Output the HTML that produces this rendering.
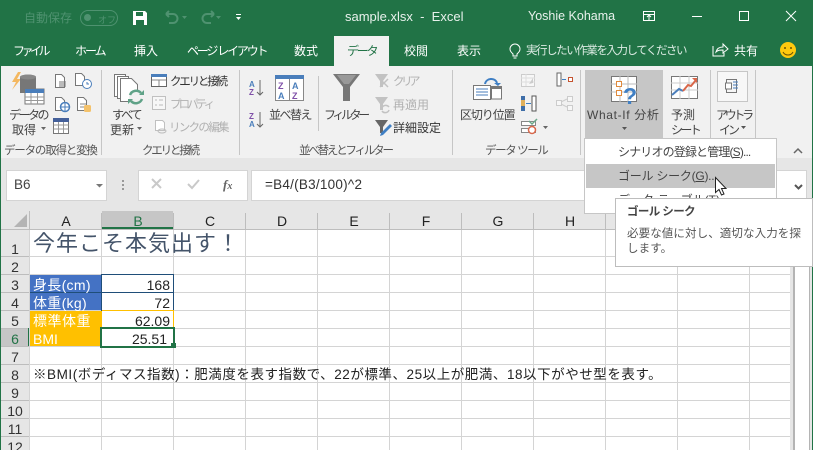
<!DOCTYPE html>
<html lang="ja"><head><meta charset="utf-8"><title>sample.xlsx - Excel</title>
<style>
html,body{margin:0;padding:0;background:#fff}
#p{position:relative;width:815px;height:450px;overflow:hidden;background:#fff;font-family:"Liberation Sans","Noto Sans CJK JP",sans-serif;font-size:12px;color:#444}
.a{position:absolute}
.t{position:absolute;white-space:nowrap;line-height:14px}
.d{color:#b1b1b1}
svg{position:absolute;left:0;top:0}
.c{color:#222;font-size:14px;line-height:16px}
.w{color:#fff}
.r{position:absolute;left:1px;width:28px;text-align:center;color:#333;font-size:14px;line-height:16px}
.h{position:absolute;top:214px;width:72px;text-align:center;color:#222;font-size:14px;line-height:14px}
</style></head><body><div id="p">
<div class="a" style="left:0;top:0;width:813px;height:66px;background:#217346"></div>
<div class="a" style="left:1px;top:66px;width:811px;height:92px;background:#f1f1f1"></div>
<div class="a" style="left:1px;top:158px;width:811px;height:53px;background:#e6e6e6"></div>
<div class="a" style="left:0;top:66px;width:1px;height:384px;background:#217346"></div>
<div class="a" style="left:812px;top:66px;width:1px;height:384px;background:#217346"></div>
<div class="a" style="left:334px;top:36px;width:55px;height:30px;background:#f1f1f1"></div>

<div class="t" style="left:24px;top:11px;color:#4f9270;font-size:12px">自動保存</div>
<div class="a" style="left:80px;top:10px;width:36px;height:14px;border:1px solid #4f9270;border-radius:8px"></div>
<div class="a" style="left:84px;top:14px;width:7px;height:7px;border-radius:50%;background:#4f9270"></div>
<div class="t" style="left:98px;top:13px;color:#4f9270;font-size:9px">オフ</div>
<div class="t w" style="left:345px;top:10px;font-size:13px;color:#e8f1ec">sample.xlsx&nbsp; - &nbsp;Excel</div>
<div class="t w" style="left:528px;top:9px;font-size:12.5px;color:#e8f1ec">Yoshie Kohama</div>

<div class="t w" style="left:13px;top:44px;letter-spacing:-3.5px">ファイル</div>
<div class="t w" style="left:75px;top:44px;letter-spacing:-2px">ホーム</div>
<div class="t w" style="left:134px;top:44px">挿入</div>
<div class="t w" style="left:187px;top:44px;letter-spacing:-2.2px">ページ レイアウト</div>
<div class="t w" style="left:294px;top:44px">数式</div>
<div class="t" style="left:347px;top:44px;color:#217346;letter-spacing:-2.2px">データ</div>
<div class="t w" style="left:404px;top:44px">校閲</div>
<div class="t w" style="left:457px;top:44px">表示</div>
<div class="t" style="left:526px;top:44px;font-size:11.5px;letter-spacing:-1.45px;color:#dcebe3">実行したい作業を入力してください</div>
<div class="t w" style="left:734px;top:44px">共有</div>

<div class="t" style="left:9px;top:108px;letter-spacing:-2.5px">データの</div>
<div class="t" style="left:12px;top:123px">取得</div>
<div class="t" style="left:112px;top:108px;letter-spacing:-2px">すべて</div>
<div class="t" style="left:110px;top:123px">更新</div>
<div class="t" style="left:170px;top:75px;color:#333;letter-spacing:-2.2px;font-size:11.5px">クエリと接続</div>
<div class="t d" style="left:170px;top:98px;font-size:11.5px;letter-spacing:-2.9px">プロパティ</div>
<div class="t d" style="left:169px;top:121px;font-size:11.5px;letter-spacing:-1.7px">リンクの編集</div>
<div class="t" style="left:269px;top:108px;letter-spacing:-1.5px">並べ替え</div>
<div class="t" style="left:324px;top:108px;letter-spacing:-3.4px">フィルター</div>
<div class="t d" style="left:393px;top:75px;font-size:11.5px;letter-spacing:-3.5px">クリア</div>
<div class="t d" style="left:393px;top:98px">再適用</div>
<div class="t" style="left:393px;top:121px;color:#333">詳細設定</div>
<div class="t" style="left:460px;top:108px;letter-spacing:-1.1px">区切り位置</div>

<div class="a" style="left:585px;top:70px;width:78px;height:68px;background:#c6c6c6"></div>
<div class="t" style="left:587px;top:108px;font-size:12px;letter-spacing:.65px;color:#444">What-If 分析</div>
<div class="t" style="left:671px;top:108px">予測</div>
<div class="t" style="left:671px;top:123px;letter-spacing:-2.6px">シート</div>
<div class="a" style="left:717px;top:71px;width:29px;height:29px;border:1px solid #c6c6c6;background:#f7f7f7"></div>
<div class="t" style="left:716px;top:108px;letter-spacing:-3.3px">アウトラ</div>
<div class="t" style="left:719px;top:123px;letter-spacing:-3px">イン</div>

<div class="t" style="left:4px;top:144px;font-size:11.5px;letter-spacing:-1.2px;color:#555">データの取得と変換</div>
<div class="t" style="left:142px;top:144px;font-size:11.5px;letter-spacing:-2.2px;color:#555">クエリと接続</div>
<div class="t" style="left:299px;top:144px;font-size:11.5px;letter-spacing:-2.2px;color:#555">並べ替えとフィルター</div>
<div class="t" style="left:485px;top:144px;font-size:11.5px;letter-spacing:-1.4px;color:#555">データ ツール</div>

<div class="a" style="left:6px;top:170px;width:101px;height:31px;background:#fff;border:1px solid #d4d4d4;box-sizing:border-box"></div>
<div class="t" style="left:14px;top:178px;font-size:13.5px;color:#444">B6</div>
<div class="a" style="left:138px;top:170px;width:110px;height:31px;background:#fff;border:1px solid #d4d4d4;box-sizing:border-box"></div>
<div class="a" style="left:251px;top:170px;width:556px;height:31px;background:#fff;border:1px solid #d4d4d4;box-sizing:border-box"></div>
<div class="t" style="left:265px;top:178px;font-size:13.5px;color:#333;letter-spacing:.25px">=B4/(B3/100)^2</div>
<div class="t" style="left:223px;top:178px;font-family:'Liberation Serif',serif;font-style:italic;font-weight:bold;font-size:13px;color:#666">f<span style="font-size:10px">x</span></div>

<!-- grid -->
<div class="a" style="left:1px;top:211px;width:789px;height:18px;background:#e6e6e6"></div>
<div class="a" style="left:1px;top:229px;width:28px;height:221px;background:#e6e6e6"></div>
<div class="a" style="left:102px;top:211px;width:71px;height:18px;background:#c6c6c6"></div>
<div class="a" style="left:1px;top:328px;width:28px;height:18px;background:#c6c6c6"></div>
<svg width="815" height="450" shape-rendering="crispEdges">
<g stroke="#d4d4d4" fill="none">
<path d="M29.5 229V450M101.500 229V450M173.500 229V450M245.500 229V450M317.500 229V450M389.500 229V450M461.500 229V450M533.500 229V450M605.500 229V450M677.500 229V450M749.500 229V450"/>
<path d="M29 256.500H790M29 274.500H790M29 292.500H790M29 310.500H790M29 328.500H790M29 346.500H790M29 364.500H790M29 382.500H790M29 400.500H790M29 418.500H790M29 436.500H790"/>
</g>
<g stroke="#bdbdbd" fill="none">
<path d="M29.500 211V229M101.500 213V229M173.500 213V229M245.500 213V229M317.500 213V229M389.500 213V229M461.500 213V229M533.500 213V229M605.500 213V229M677.500 213V229M749.500 213V229"/>
<path d="M1 229.500H790M1 256.500H29M1 274.500H29M1 292.500H29M1 310.500H29M1 328.500H29M1 346.500H29M1 364.500H29M1 382.500H29M1 400.500H29M1 418.500H29M1 436.500H29"/>
</g>
<rect x="790" y="211" width="3" height="239" fill="#e6e6e6"/>
<rect x="793" y="211" width="2" height="239" fill="#b4b4b4"/>
<rect x="795" y="211" width="14" height="239" fill="#fff"/>
<rect x="809" y="211" width="1" height="239" fill="#b4b4b4"/>
<rect x="810" y="211" width="2" height="239" fill="#e6e6e6"/>
<rect x="30" y="275" width="71" height="35" fill="#4472c4"/>
<rect x="30" y="311" width="71" height="35" fill="#ffc000"/>
<path d="M101.500 274V311M173.500 274V311M102 274.500H174M102 292.500H174" stroke="#1f4e79" fill="none"/>
<path d="M30 292.500H101" stroke="#1f4e79"/>
<path d="M102 310.500H174M173.500 311V328M101.500 311V346" stroke="#ffc000" fill="none"/>
<rect x="101" y="328" width="73" height="19" fill="none" stroke="#217346" stroke-width="2"/>
<rect x="171" y="343" width="5" height="5" fill="#217346"/>
<rect x="102" y="227" width="71" height="2" fill="#217346"/>
<rect x="28" y="328" width="1" height="18" fill="#217346"/>
</svg>
<div class="h" style="left:30px">A</div><div class="h" style="left:102px;color:#217346">B</div><div class="h" style="left:174px">C</div><div class="h" style="left:246px">D</div><div class="h" style="left:318px">E</div><div class="h" style="left:390px">F</div><div class="h" style="left:462px">G</div><div class="h" style="left:534px">H</div>
<div class="r" style="top:241px">1</div><div class="r" style="top:259px">2</div><div class="r" style="top:277px">3</div><div class="r" style="top:295px">4</div><div class="r" style="top:313px">5</div><div class="r" style="top:331px;color:#217346">6</div><div class="r" style="top:349px">7</div><div class="r" style="top:367px">8</div><div class="r" style="top:385px">9</div><div class="r" style="top:403px">10</div><div class="r" style="top:421px">11</div><div class="r" style="top:439px">12</div>

<div class="t" style="left:33px;top:232px;font-size:22px;line-height:24px;color:#44546a;letter-spacing:1px">今年こそ本気出す！</div>
<div class="t c w" style="left:33px;top:277px;letter-spacing:.3px">身長(cm)</div>
<div class="t c w" style="left:33px;top:295px;letter-spacing:.3px">体重(kg)</div>
<div class="t c w" style="left:33px;top:313px;letter-spacing:.5px">標準体重</div>
<div class="t c w" style="left:33px;top:331px">BMI</div>
<div class="t c" style="right:645px;top:277px">168</div>
<div class="t c" style="right:645px;top:295px">72</div>
<div class="t c" style="right:645px;top:313px">62.09</div>
<div class="t c" style="right:648px;top:331px">25.51</div>
<div class="t c" style="left:33px;top:367px;font-size:13.5px;letter-spacing:.55px">※BMI(ボディマス指数)：肥満度を表す指数で、22が標準、25以上が肥満、18以下がやせ型を表す。</div>

<!-- menu -->
<div class="a" style="left:584px;top:138px;width:193px;height:76px;background:#fff;border:1px solid #c6c6c6;box-sizing:border-box"></div>
<div class="a" style="left:586px;top:164px;width:189px;height:24px;background:#c6c6c6"></div>
<div class="t" style="left:618px;top:145px;font-size:12px;letter-spacing:-.85px">シナリオの登録と管理(<u>S</u>)...</div>
<div class="t" style="left:618px;top:169px;font-size:12px;letter-spacing:-.25px">ゴール シーク(<u>G</u>)...</div>
<div class="t" style="left:618px;top:193px;font-size:12px">データ テーブル(<u>T</u>)...</div>
<div class="a" style="left:615px;top:198px;width:198px;height:69px;background:#fff;border:1px solid #bdbdbd;box-sizing:border-box"></div>
<div class="t" style="left:627px;top:205px;font-size:11.500px;font-weight:bold;letter-spacing:-.6px;color:#444">ゴール シーク</div>
<div class="t" style="left:627px;top:227px;font-size:11.500px;line-height:15px;white-space:normal;width:180px;letter-spacing:.1px;color:#555">必要な値に対し、適切な入力を探します。</div>

<svg width="815" height="450">
<!-- QAT -->
<g fill="#fff"><path d="M133 11h12l2 2v12h-14z"/></g>
<path d="M136 12h7v4h-7zM136 20h8v5h-8z" fill="#217346"/>
<g fill="none" stroke="#4f9270" stroke-width="2"><path d="M167 14h6a4 4 0 0 1 0 9h-4M166 14l3-3M166 14l3 3"/><path d="M213 14h-6a4 4 0 0 0 0 9h4M214 14l-3-3M214 14l-3 3"/></g>
<path d="M182 16h5l-2.500 3zM216 16h5l-2.500 3z" fill="#4f9270"/>
<path d="M236 14h5v1h-5zM236 17h5l-2.500 3z" fill="#fff"/>
<!-- window controls -->
<g fill="none" stroke="#fff"><path d="M643.500 11.500h11v9h-11zM643.500 14.500h11M649 20v-4M647 17l2-2 2 2"/><path d="M692 16.500h10"/><rect x="739.500" y="11.500" width="9" height="9"/><path d="M786 11l10 10M796 11l-10 10"/></g>
<!-- bulb/share/smile -->
<g fill="none" stroke="#fff"><path d="M513 54c-2-2-3-3-3-5a5 5 0 0 1 10 0c0 2-1 3-3 5v2h-4zM513.500 58h3"/><path d="M713 46v10h11v-3M716 52c1-4 4-5 7-5v-3l5 5-5 4v-3c-3 0-5 0-7 2z"/></g>
<circle cx="788" cy="50" r="8" fill="#ffc90e"/><circle cx="785" cy="48" r="1" fill="#6b5300"/><circle cx="791" cy="48" r="1" fill="#6b5300"/><path d="M783 52c2 4 8 4 10 0" fill="none" stroke="#6b5300"/>
<!-- separators -->
<g stroke="#c6c6c6" shape-rendering="crispEdges"><path d="M101.500 70V155M239.500 70V155M318.500 76V131M452.500 70V155M580.500 70V155M710.500 70V138M755.500 70V138"/></g>
<!-- get data -->
<path d="M18 72l-6 10h4l-4 8 9-11h-4l4-7z" fill="#f4b860"/>
<path d="M20 77c0-3 16-3 16 0v16H20z" fill="#777"/><ellipse cx="28" cy="77" rx="8" ry="2.500" fill="#888"/>
<rect x="25" y="89" width="19" height="15" fill="#fff" stroke="#777"/><rect x="25" y="89" width="19" height="4" fill="#4a7ebb"/>
<path d="M25 97h19M25 100.500h19M31 93v11M37.500 93v11" stroke="#999" fill="none"/>
<g fill="#fff" stroke="#777"><path d="M55.500 74.500h6l3 3v10h-9z"/><path d="M75.500 73.500h6l3 3v9h-9z"/><path d="M55.500 97.500h6l3 3v10h-9z"/><path d="M77.500 97.500h6l3 3v10h-9z"/></g>
<path d="M59 82h7M59 84h7M59 86h7" stroke="#777" fill="none"/>
<circle cx="87" cy="84" r="4.500" fill="#fff" stroke="#4a7ebb"/><path d="M87 82v2h2" stroke="#4a7ebb" fill="none"/>
<circle cx="65" cy="107" r="4.500" fill="#fff" stroke="#4a7ebb" stroke-width="1.500"/><path d="M61 107h8M65 103v8" stroke="#4a7ebb"/>
<path d="M80 104h6M80 107h4" stroke="#888" fill="none"/><rect x="84" y="105" width="7" height="7" rx="1.500" fill="#f4c26b"/>
<rect x="53.500" y="118.500" width="15" height="15" fill="#fff" stroke="#777"/><rect x="53" y="118" width="16" height="4" fill="#44609a"/><path d="M53.500 125h15M53.500 129h15M58.500 122v11M63.500 122v11" stroke="#999" fill="none"/>
<!-- refresh all -->
<g fill="#fff" stroke="#777"><path d="M114.500 74.500h11v22h-11z"/><path d="M117.500 76.500h11v22h-11z"/><path d="M120.500 78.500h11l6 6v17h-17z"/></g>
<circle cx="136" cy="97" r="7" fill="#f1f1f1"/><path d="M130 95a6.500 6.500 0 0 1 11-2M142 99a6.500 6.500 0 0 1-11 2" fill="none" stroke="#5fa287" stroke-width="2.500"/>
<path d="M139 95h5v-5zM133 99h-5v5z" fill="#5fa287"/>
<rect x="151.500" y="74.500" width="15" height="12" fill="#fff" stroke="#666"/><rect x="151" y="74" width="16" height="3" fill="#4a7ebb"/><path d="M152 80h14M159 80v6" stroke="#888" fill="none"/>
<rect x="152.500" y="96.500" width="13" height="13" fill="#f7f7f7" stroke="#c0c0c0"/><path d="M155 100h2M159 100h4M155 105h2M159 105h4" stroke="#bbb" fill="none"/>
<path d="M155.500 120.500h7l2 2v8h-9z" fill="#fff" stroke="#c0c0c0"/><ellipse cx="162" cy="131" rx="4" ry="2" fill="none" stroke="#bbb"/>
<path d="M41 127h5l-2.500 3zM137 127h5l-2.500 3z" fill="#666"/>
<!-- sort -->
<text x="249" y="87" font-size="8" font-weight="bold" font-family="Liberation Sans" fill="#4a7ebb">A</text><text x="249" y="95" font-size="8" font-weight="bold" font-family="Liberation Sans" fill="#7f4fa8">Z</text>
<text x="249" y="119" font-size="8" font-weight="bold" font-family="Liberation Sans" fill="#7f4fa8">Z</text><text x="249" y="127" font-size="8" font-weight="bold" font-family="Liberation Sans" fill="#4a7ebb">A</text>
<path d="M260 80v15M257 92l3 3 3-3M260 112v15M257 124l3 3 3-3" fill="none" stroke="#666"/>
<rect x="275.500" y="76.500" width="28" height="24" fill="#fff" stroke="#888"/><rect x="275" y="75" width="29" height="4" fill="#4a7ebb"/><path d="M289.500 79v22" stroke="#888"/>
<text x="278" y="89" font-size="9" font-weight="bold" font-family="Liberation Sans" fill="#7f4fa8">Z</text><text x="278" y="99" font-size="9" font-weight="bold" font-family="Liberation Sans" fill="#4a7ebb">A</text>
<text x="292" y="89" font-size="9" font-weight="bold" font-family="Liberation Sans" fill="#4a7ebb">A</text><text x="292" y="99" font-size="9" font-weight="bold" font-family="Liberation Sans" fill="#7f4fa8">Z</text>
<!-- filter -->
<path d="M333 74h27l-10 13v14h-7V87z" fill="#777"/><path d="M337 75h19l-7 9h-5z" fill="#999"/>
<path d="M375 74h13l-5 7v6h-3v-6z" fill="#c2c2c2"/><path d="M380 79l8 8M388 79l-8 8" stroke="#c2c2c2" stroke-width="1.500"/>
<path d="M375 97h13l-5 7v6h-3v-6z" fill="#c2c2c2"/><path d="M382 108a4 4 0 0 1 7-1M389 110a4 4 0 0 1-7 1" fill="none" stroke="#c2c2c2" stroke-width="1.500"/>
<path d="M375 120h13l-5 7v6h-3v-6z" fill="#666"/><path d="M381 133l9-9 2 2-9 9-3 1z" fill="#3f7fc4"/>
<!-- text to columns -->
<rect x="473.500" y="85.500" width="17" height="14" fill="#fff" stroke="#777"/><path d="M476 89h12M476 92h12M476 95h12" stroke="#4a7ebb"/>
<rect x="491.500" y="87" width="10" height="12" fill="#fff" stroke="#777"/><rect x="491" y="86" width="11" height="3" fill="#777"/>
<path d="M485 84c1-6 10-7 12-1" fill="none" stroke="#3f7fc4" stroke-width="2"/><path d="M494 83h7l-3 3z" fill="#3f7fc4"/>
<rect x="521.500" y="74.500" width="13" height="12" fill="#f7f7f7" stroke="#ccc"/><path d="M521 78h14M521 82h14M526 74v12" stroke="#ddd"/><path d="M529 84l4-6v5z" fill="#ccc"/>
<rect x="521" y="96" width="4" height="15" fill="#3f6ea8"/><rect x="521" y="100" width="4" height="6" fill="#e0b05c"/><rect x="532" y="96" width="4" height="15" fill="#fff" stroke="#555"/><path d="M526 103.500h5" stroke="#3f7fc4"/>
<rect x="521.500" y="121.500" width="14" height="4" fill="#fff" stroke="#888"/><rect x="521.500" y="128.500" width="14" height="4" fill="#fff" stroke="#888"/><path d="M529 121l3 3 5-5" fill="none" stroke="#6aa88a" stroke-width="1.500"/><circle cx="532" cy="130" r="3.500" fill="#fff" stroke="#d9674a" stroke-width="1.500"/>
<path d="M543 126h5l-2.500 3z" fill="#666"/>
<rect x="557" y="73" width="4" height="13" fill="#fff" stroke="#666"/><path d="M562 79.500h4" stroke="#3f7fc4"/><rect x="568.500" y="77.500" width="4" height="4" fill="#fff" stroke="#c5532f"/>
<g fill="#f7f7f7" stroke="#ccc"><rect x="556.500" y="100.500" width="5" height="5"/><rect x="567.500" y="96.500" width="5" height="5"/><rect x="567.500" y="105.500" width="5" height="5"/></g><path d="M561 102l6-3M561 104l6 3" stroke="#ccc"/>
<path d="M622 127h5l-2.500 3zM741 126h5l-2.500 3z" fill="#555"/>
<!-- what-if -->
<rect x="611.500" y="76.500" width="25" height="25" fill="#fff" stroke="#777"/><path d="M611 84h26M611 92h26M620 76v26M628 76v26" stroke="#bbb"/><rect x="616.500" y="81.500" width="5" height="5" fill="#fff" stroke="#e08a3c"/><rect x="616.500" y="90.500" width="5" height="5" fill="#fff" stroke="#e08a3c"/>
<text x="623" y="104" font-size="23" font-weight="bold" font-family="Liberation Sans" fill="#3f7fc4">?</text>
<rect x="671.500" y="76.500" width="26" height="22" fill="#fff" stroke="#777"/><path d="M671 83h27M671 90h27M680 76v23M689 76v23" stroke="#ccc"/>
<path d="M672 95l7-6 4 2" fill="none" stroke="#4a7ebb" stroke-width="2"/><path d="M683 91l5-6 3 1 5-6" fill="none" stroke="#d9674a" stroke-width="2"/><path d="M692 78h5v5z" fill="#d9674a"/>
<rect x="726.500" y="79.500" width="10" height="13" fill="none" stroke="#777"/><rect x="725.500" y="83" width="6" height="6" fill="#fff" stroke="#777"/><path d="M733 82h5M733 85h5M733 88h5" stroke="#4a7ebb"/>
<path d="M794 153l4-4 4 4" fill="none" stroke="#666" stroke-width="1.500"/>
<!-- formula -->
<path d="M96 184h7l-3.500 3.500z" fill="#777"/>
<path d="M152 179l9 9M161 179l-9 9" stroke="#c9c9c9" stroke-width="2"/><path d="M188 184l4 4 7-8" fill="none" stroke="#c9c9c9" stroke-width="2"/>
<g fill="#999"><rect x="122" y="180" width="2" height="2"/><rect x="122" y="184" width="2" height="2"/><rect x="122" y="188" width="2" height="2"/></g>
<path d="M795 185l3.500 3.500 3.500-3.500" fill="none" stroke="#555" stroke-width="2"/>
<path d="M27 214v13H14z" fill="#b4b4b4"/>
<!-- cursor -->
<path d="M715.500 177.500v15l3.500-3 2.500 5.500 2.500-1-2.500-5.500h4.500z" fill="#fff" stroke="#222"/>
</svg>
</div></body></html>
